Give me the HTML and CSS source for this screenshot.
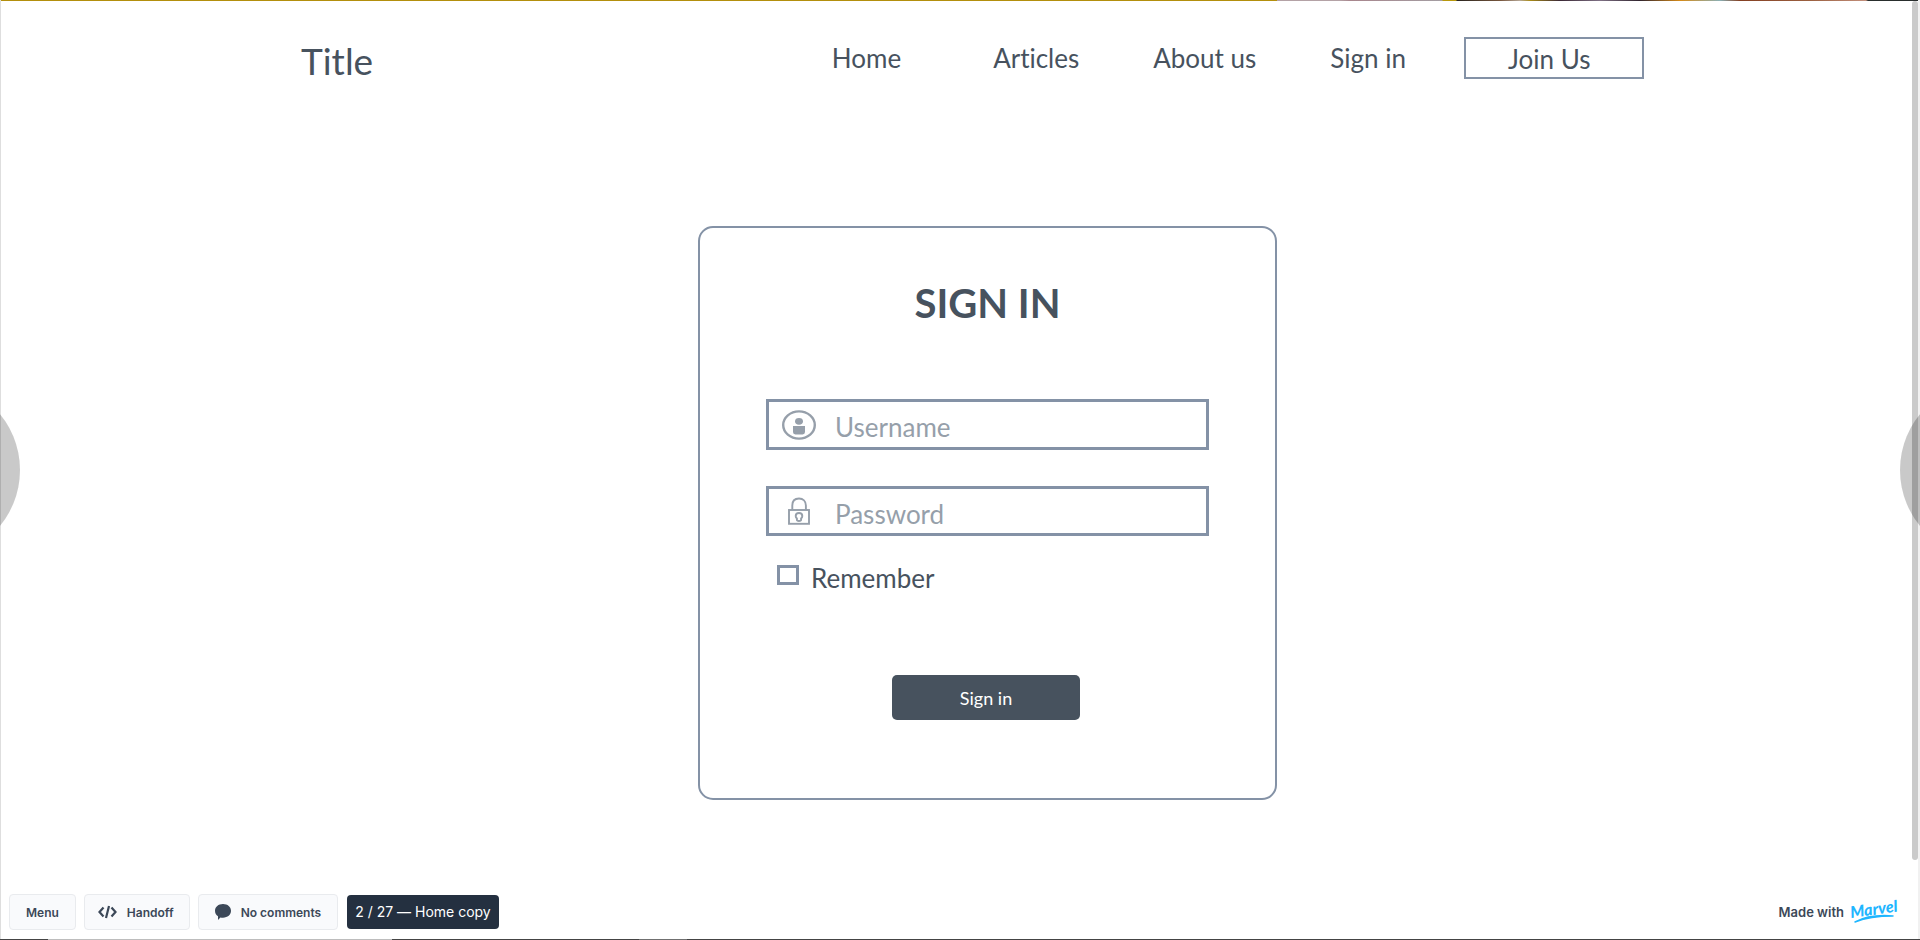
FILE: index.html
```html
<!DOCTYPE html>
<html lang="en">
<head>
<meta charset="utf-8">
<title>Sign in</title>
<link rel="stylesheet" href="styles.css">
</head>
<body>
<div class="strip strip-top"></div>
<header class="header">
  <div class="header-inner">
    <a class="brand" href="#">Title</a>
    <nav class="nav">
      <a class="nav-link" href="#">Home</a>
      <a class="nav-link nav-wide" href="#">Articles</a>
      <a class="nav-link nav-mid" href="#">About us</a>
      <a class="nav-link nav-mid" href="#">Sign in</a>
      <a class="nav-link join" href="#">Join Us</a>
    </nav>
  </div>
</header>
<main class="main">
  <form class="card">
    <h1 class="card-title">SIGN IN</h1>
    <div class="field">
      <label class="field-icon" for="username" aria-label="Username">
        <svg width="34" height="30" viewBox="0 0 34 30"><ellipse cx="17" cy="15" rx="15.8" ry="13.6" fill="none" stroke="currentColor" stroke-width="2.4"/><ellipse cx="17" cy="11.3" rx="4" ry="3.4" fill="currentColor"/><path d="M11 16h12v6q0 2.4-2.4 2.4h-7.200q-2.400 0-2.400-2.400z" fill="currentColor"/></svg>
      </label>
      <input class="input" id="username" type="text" placeholder="Username">
    </div>
    <div class="field field-last">
      <label class="field-icon" for="password" aria-label="Password">
        <svg width="22" height="28" viewBox="0 0 22 28" fill="none" stroke="currentColor" stroke-width="1.900"><rect x="1" y="13" width="20" height="13.800"/><path d="M4.300 13V8.500C4.300 4 7 1.500 11 1.500s6.900 2.500 6.900 7V13"/><path d="M11 16c-2 0-3.300 1.300-3.300 3 0 1.200.6 1.900 1.200 2.500v1.300c0 .8.8 1.200 2.100 1.200s2.100-.4 2.100-1.200v-1.300c.6-.6 1.200-1.300 1.200-2.500 0-1.700-1.300-3-3.300-3z"/></svg>
      </label>
      <input class="input" id="password" type="password" placeholder="Password">
    </div>
    <div class="remember">
      <input class="check" id="remember" type="checkbox">
      <label for="remember">Remember</label>
    </div>
    <button class="submit" type="button">Sign in</button>
  </form>
</main>
<footer class="toolbar">
  <div class="tools">
    <button class="tool" type="button">Menu</button>
    <button class="tool tool-code" type="button">
      <svg width="19" height="14" viewBox="0 0 19 14" fill="none" stroke="currentColor" stroke-width="2.200"><path d="M5.500 2.500L1.500 7l4 4.500M13.500 2.500l4 4.500-4 4.500M11 1L8 13"/></svg>
      Handoff
    </button>
    <button class="tool tool-comments" type="button">
      <svg width="16" height="16" viewBox="0 0 16 16" fill="currentColor"><path d="M8 0c4.600 0 8 2.900 8 6.800s-3.400 6.900-8 6.900c-.9 0-1.800-.1-2.600-.3L3 16v-3.700C1.100 11 0 9.100 0 6.800 0 2.900 3.400 0 8 0z"/></svg>
      No comments
    </button>
    <span class="page">2 / 27 — Home copy</span>
  </div>
  <a class="made" href="#">Made with
    <svg class="logo" width="52" height="28" viewBox="0 0 52 28" role="img" aria-label="Marvel"><text class="logo-text" x="1" y="20" transform="rotate(-8 1 20)">Marvel</text><path d="M5 24Q20 16 43 18Q20 18 5 24z" fill="#1fb6ff" stroke="#1fb6ff" stroke-width="1.500" stroke-linejoin="round"/></svg>
  </a>
</footer>
<div class="edge"></div>
<div class="track"></div>
<div class="thumb"></div>
<button class="arrow arrow-left" type="button" aria-label="Previous"></button>
<button class="arrow arrow-right" type="button" aria-label="Next"></button>
<div class="strip strip-bottom"></div>
</body>
</html>
```
FILE: styles.css
```css
* { box-sizing: border-box; }
body {
  margin: 0;
  min-height: 100vh;
  display: flex;
  flex-direction: column;
  overflow: hidden;
  background: #fff;
  color: #47525e;
  font-family: Lato, "Liberation Sans", sans-serif;
  font-variant-ligatures: none;
}
a { color: inherit; text-decoration: none; }
button, input { font-family: inherit; }
svg { display: block; flex: none; }

.header { padding: 37px 0 0 25px; }
.header-inner {
  max-width: 1343px;
  margin: 0 auto;
  display: flex;
  justify-content: space-between;
  align-items: flex-start;
}
.brand { font-size: 37px; line-height: 48px; }
.nav { display: flex; align-items: center; gap: 58px; font-size: 26px; line-height: 38px; }
.nav-wide { padding-left: 34px; }
.nav-mid { padding-left: 16px; }
.join { width: 180px; padding: 2px 0 0 42px; border: 2px solid #8492a6; line-height: 36px; }

.main { padding: 141px 0 0 55px; }
.card {
  width: 579px;
  max-width: 100%;
  margin: 0 auto;
  padding: 52px 66px 78px;
  display: flex;
  flex-direction: column;
  border: 2px solid #8492a6;
  border-radius: 15px;
}
.card-title { margin: 0 0 73px; font-size: 40px; line-height: 46px; text-align: center; }
.field {
  display: flex;
  height: 51px;
  margin-bottom: 36px;
  border: 3px solid #8492a6;
}
.field-last { height: 50px; margin-bottom: 24px; }
.field-icon {
  width: 60px;
  display: flex;
  align-items: center;
  justify-content: center;
  color: #969faa;
}
.input {
  flex: 1;
  min-width: 0;
  padding: 5px 0 0 6px;
  border: 0;
  outline: 0;
  background: none;
  color: #47525e;
  font-size: 26px;
}
.input::placeholder { color: #969faa; opacity: 1; }
.remember {
  display: flex;
  align-items: flex-start;
  gap: 12px;
  margin: 0 0 79px 11px;
  font-size: 26px;
  line-height: 36px;
}
.check {
  appearance: none;
  width: 22px;
  height: 20px;
  margin: 5px 0 0;
  border: 3px solid #8492a6;
}
.submit {
  align-self: center;
  width: 188px;
  height: 45px;
  margin-right: 3px;
  padding: 0;
  border: 0;
  border-radius: 5px;
  background: #47525e;
  color: #fff;
  font-size: 18px;
}

.toolbar {
  margin-top: auto;
  padding: 0 18px 10px 9px;
  display: flex;
  justify-content: space-between;
  align-items: center;
  color: #3c4858;
  font-family: Inter, "Liberation Sans", sans-serif;
}
.tools { display: flex; align-items: center; gap: 8px; }
.tool {
  display: flex;
  align-items: center;
  gap: 10px;
  height: 36px;
  padding: 0 16px;
  border: 1px solid #e9ebee;
  border-radius: 4px;
  background: #f9fafc;
  color: #3c4858;
  font-size: 12px;
  font-weight: 600;
}
.tool-code { padding: 0 15px 0 13px; }
.page {
  padding: 0 8px;
  margin-left: 1px;
  border-radius: 4px;
  background: #243040;
  color: #fff;
  font-size: 14px;
  line-height: 34px;
}
.made { display: flex; align-items: center; gap: 6px; font-size: 13px; font-weight: 600; }
.logo { overflow: visible; }
.logo-text { fill: #1fb6ff; font: italic 900 16px Lato, sans-serif; }

.edge { position: fixed; top: 0; bottom: 0; left: 0; width: 1px; background: #dedede; }
.track { position: fixed; top: 0; bottom: 0; right: 0; width: 2px; background: #f1f1f1; }
.thumb { position: fixed; top: 1px; right: 2px; width: 6px; height: calc(100vh - 81px); border-radius: 3px; background: #cacaca; }
.arrow {
  position: fixed;
  top: calc(50vh - 88px);
  width: 176px;
  height: 176px;
  border: 0;
  border-radius: 50%;
  background: rgba(0, 0, 0, .21);
}
.arrow-left { left: -156px; }
.arrow-right { right: -156px; }
.strip { position: fixed; left: 0; right: 0; height: 1px; }
.strip-top {
  top: 0;
  background: linear-gradient(90deg, #b38f0c 0 1277px, #b4a2a6 1277px 1340px, #a8868d 1350px, #a39da2 1442px, #b8980c 1443px 1456px, #29241f 1457px, #76553c 1500px, #b6a796 1520px, #a98b18 1530px, #3b2936 1560px, #7f7185 1600px, #30242e 1640px, #d58a18 1680px, #8bb0b5 1720px, #843f22 1740px, #9b6040 1810px, #c28f7b 1866px, #292e2d 1868px);
}
.strip-bottom {
  bottom: 0;
  background: linear-gradient(90deg, #444 0 48px, #bdbdbd 48px 392px, #444 392px 639px, #707070 639px 687px, #444 687px);
}
```
